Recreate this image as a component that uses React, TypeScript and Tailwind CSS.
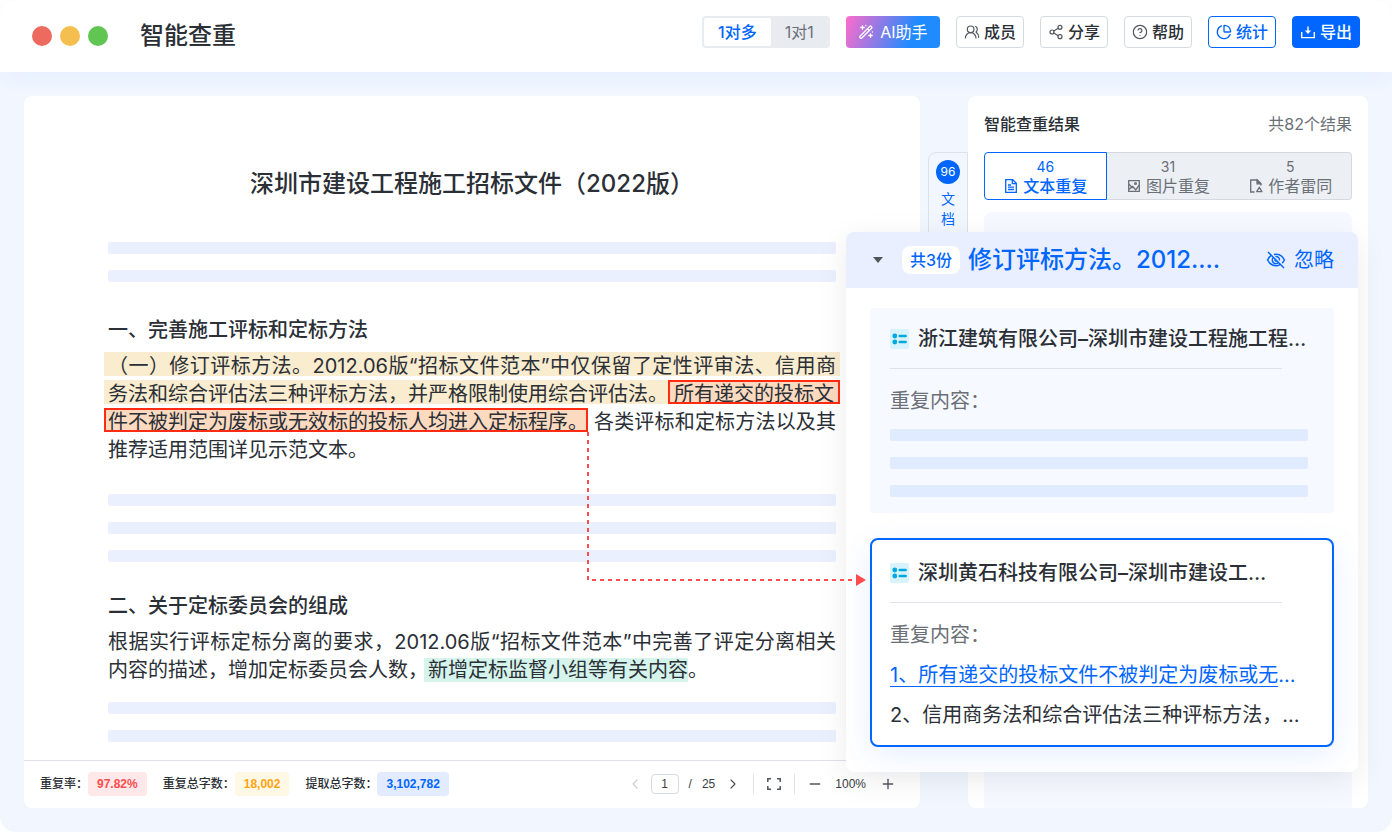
import { useState } from "react";
import type { ReactNode } from "react";
import { ChevronLeft, ChevronRight, CircleHelp, Minus, PieChart, Plus, Share2, UsersRound } from "lucide-react";
import { clsx } from "clsx";

/* ---------- icons ---------- */

function WandIcon() {
  return (
    <svg viewBox="0 0 16 16" className="size-4" fill="none" stroke="currentColor" strokeWidth="1.3" strokeLinejoin="round" strokeLinecap="round" aria-hidden="true">
      <path d="M2 12.2 11.8 2.4a1 1 0 0 1 1.4 0l.4.4a1 1 0 0 1 0 1.4L3.8 14a1 1 0 0 1-1.4 0L2 13.6a1 1 0 0 1 0-1.4z" />
      <path d="m9.6 4.700 1.8 1.8" />
      <path d="M4.5 1.8v3.4M2.8 3.5h3.4M12.500 9.8v3.4M10.8 11.5h3.4M7.8 1.5v.2M14.500 7.8v.2" />
    </svg>
  );
}

function ExportIcon() {
  return (
    <svg viewBox="0 0 16 16" className="size-4" fill="none" stroke="currentColor" strokeWidth="1.4" aria-hidden="true">
      <path d="M1.7 8v5.6h12.6V8" />
      <path d="M8 2.5v5" />
      <path d="M4.8 6.5h6.4L8 10z" fill="currentColor" stroke="none" />
    </svg>
  );
}

function TextFileIcon() {
  return (
    <svg viewBox="0 0 16 16" className="size-4" fill="none" stroke="currentColor" strokeWidth="1.3" aria-hidden="true">
      <path d="M2.7 1.7h7l3.6 3.6v9H2.7z" />
      <path d="M9.3 1.7v4h4" />
      <path d="M5 7h3M5 9.2h6M5 11.5h6" />
    </svg>
  );
}

function PictureIcon() {
  return (
    <svg viewBox="0 0 16 16" className="size-4" fill="none" stroke="currentColor" strokeWidth="1.3" aria-hidden="true">
      <path d="M2.7 2.7h10.6v10.6H2.7z" />
      <path d="m2.7 6 4 4M2.7 11.5l4-3 3 3.5 3.6-5" />
      <circle cx="9.5" cy="5.5" r=".9" />
    </svg>
  );
}

function AuthorFileIcon() {
  return (
    <svg viewBox="0 0 16 16" className="size-4" fill="none" stroke="currentColor" strokeWidth="1.3" aria-hidden="true">
      <path d="M6.5 14H2.7V2h6.6l3.5 3.5v2" />
      <path d="M9 2v3.8h3.8z" fill="currentColor" />
      <path d="M11.3 9.3 8.7 13.7h5.2z" strokeLinejoin="round" />
    </svg>
  );
}

function IgnoreIcon() {
  return (
    <svg viewBox="0 0 20 20" className="size-5" fill="none" stroke="currentColor" strokeWidth="1.5" aria-hidden="true">
      <path d="M5.6 5.2C3.900 6.300 2.500 8 1.600 10c1.700 3.500 4.800 5.700 8.400 5.700 1.500 0 2.900-.4 4.200-1.100M8 4.500a9 9 0 0 1 2-.2c3.600 0 6.700 2.200 8.400 5.700a10.500 10.500 0 0 1-2.200 3.100" />
      <path d="M7.300 7.600A3.500 3.500 0 0 0 12.400 12.500M9.500 6.500a3.500 3.500 0 0 1 4 4" />
      <path d="M9.200 9.400a1 1 0 0 0 1.400 1.400" />
      <path d="m2 2 16 16" />
    </svg>
  );
}

function ListBadge() {
  return (
    <svg viewBox="0 0 20 20" className="size-5 shrink-0" aria-hidden="true">
      <rect width="19" height="20" rx="2" fill="#d9f3fc" />
      <circle cx="4.800" cy="7" r="2.400" fill="#00a8e1" />
      <circle cx="4.800" cy="13" r="2.400" fill="#00a8e1" />
      <path d="M9.700 7h6M9.700 13h6" stroke="#00a8e1" strokeWidth="2.400" strokeLinecap="round" />
    </svg>
  );
}

function FullscreenIcon() {
  return (
    <svg viewBox="0 0 16 16" className="size-4" fill="none" stroke="currentColor" strokeWidth="1.5" aria-hidden="true">
      <path d="M1.800 6V2.800H5M11 2.800h3.200V6M14.200 10v3.200H11M5 13.200H1.800V10" />
    </svg>
  );
}

/* ---------- small parts ---------- */

function ToolButton({ icon, label, tone = "plain" }: { icon: ReactNode; label: string; tone?: "plain" | "outline" | "solid" }) {
  return (
    <button
      type="button"
      className={clsx(
        "flex h-8 items-center gap-1 rounded border px-[7px] text-base font-medium whitespace-nowrap",
        tone === "plain" && "border-[#d5d9e2] bg-white text-[#2b2f36]",
        tone === "outline" && "border-[#0066ff] bg-white text-[#0066ff]",
        tone === "solid" && "border-[#0066ff] bg-[#0066ff] text-white"
      )}
    >
      <span className={clsx(tone === "plain" && "text-[#51565d]")}>{icon}</span>
      {label}
    </button>
  );
}

function Bars({ count, color, className }: { count: number; color: string; className?: string }) {
  return (
    <div className={clsx("flex flex-col gap-4", className)}>
      {Array.from({ length: count }, (_, i) => (
        <div key={i} className={clsx("h-3 rounded-[2px]", color)} />
      ))}
    </div>
  );
}

function Stat({ label, value, tone }: { label: string; value: string; tone: string }) {
  return (
    <div className="flex items-center">
      <dt className="font-medium">{label}</dt>
      <dd className={clsx("rounded px-[9px] font-['Liberation_Sans',sans-serif] font-bold leading-6", tone)}>{value}</dd>
    </div>
  );
}

/* ---------- header ---------- */

function Header() {
  const [mode, setMode] = useState("1对多");

  return (
    <header className="relative flex h-[72px] items-center justify-between rounded-t-2xl bg-white px-8 shadow-[0_8px_24px_rgba(0,85,255,0.05)]">
      <div className="flex items-center gap-2">
        <span className="size-5 rounded-full bg-[#ec6a5e]" />
        <span className="size-5 rounded-full bg-[#f4bf4f]" />
        <span className="size-5 rounded-full bg-[#61c554]" />
        <h1 className="ml-6 text-2xl font-medium">智能查重</h1>
      </div>

      <div className="mt-4 flex gap-4 self-start">
        <div className="flex h-8 w-32 rounded bg-[#e8ebf0] p-[2px]">
          {["1对多", "1对1"].map((item) => (
            <button
              key={item}
              type="button"
              aria-pressed={mode === item}
              onClick={() => setMode(item)}
              className={clsx(
                "flex-auto rounded-[2px] text-base leading-7",
                mode === item ? "bg-white font-medium text-[#0066ff]" : "text-[#6b7077]"
              )}
            >
              {item}
            </button>
          ))}
        </div>
        <button
          type="button"
          className="flex h-8 w-[94px] items-center justify-center gap-1.5 rounded bg-linear-[110deg,#ff6bcb_0%,#1f8bff_70%] text-base whitespace-nowrap text-white"
        >
          <WandIcon />
          AI助手
        </button>
        <ToolButton icon={<UsersRound size={16} strokeWidth={1.8} />} label="成员" />
        <ToolButton icon={<Share2 size={16} strokeWidth={1.8} />} label="分享" />
        <ToolButton icon={<CircleHelp size={16} strokeWidth={1.8} />} label="帮助" />
        <ToolButton icon={<PieChart size={16} strokeWidth={2} />} label="统计" tone="outline" />
        <ToolButton icon={<ExportIcon />} label="导出" tone="solid" />
      </div>
    </header>
  );
}

/* ---------- document ---------- */

function Footer() {
  return (
    <footer className="flex h-12 items-center justify-between border-t border-[#dfe2ea] pr-6 pb-px pl-4 text-xs">
      <dl className="flex gap-4">
        <Stat label="重复率：" value="97.82%" tone="bg-[#fee8e9] text-[#ff4d4f]" />
        <Stat label="重复总字数：" value="18,002" tone="bg-[#fff8e5] text-[#ffa414]" />
        <Stat label="提取总字数：" value="3,102,782" tone="bg-[#e2ebff] text-[#0066ff]" />
      </dl>

      <div className="flex items-center gap-3 font-['Liberation_Sans',sans-serif] text-[#3a3e45]">
        <div className="flex items-center gap-2">
          <button type="button" aria-label="上一页" className="text-[#c9cdd6]">
            <ChevronLeft size={16} strokeWidth={1.8} />
          </button>
          <input
            aria-label="页码"
            defaultValue="1"
            className="h-5 w-7 rounded border border-[#d5d9e2] text-center"
          />
          <span className="pl-0.5">/</span>
          <span className="px-0.5">25</span>
          <button type="button" aria-label="下一页" className="text-[#51565d]">
            <ChevronRight size={16} strokeWidth={1.8} />
          </button>
        </div>
        <span className="h-5 w-px bg-[#dfe2ea]" />
        <button type="button" aria-label="全屏" className="text-[#51565d]">
          <FullscreenIcon />
        </button>
        <span className="h-5 w-px bg-[#dfe2ea]" />
        <button type="button" aria-label="缩小" className="text-[#51565d]">
          <Minus size={16} strokeWidth={2} />
        </button>
        <span className="pr-0.5">100%</span>
        <button type="button" aria-label="放大" className="text-[#51565d]">
          <Plus size={16} strokeWidth={2} />
        </button>
      </div>
    </footer>
  );
}

function DocumentPane() {
  return (
    <section className="flex min-w-0 flex-1 flex-col rounded-lg bg-white">
      <article className="flex-1 px-[84px] pt-[72px] pb-4 text-xl leading-6">
        <h2 className="text-center text-2xl leading-8 font-medium">深圳市建设工程施工招标文件（2022版）</h2>
        <Bars count={2} color="bg-[#ebf0ff]" className="mt-[42px]" />

        <h3 className="mt-8 leading-8 font-medium">一、完善施工评标和定标方法</h3>
        <div className="-mx-1 mt-1.5 flex flex-col gap-1 leading-5 whitespace-nowrap">
          <div className="bg-[#f9eccf] px-1 pt-1 [text-align-last:justify]">
            （一）修订评标方法。2012.06版“招标文件范本”中仅保留了定性评审法、信用商
          </div>
          <div className="flex">
            <span className="flex-1 bg-[#f9eccf] pt-1 pl-1">务法和综合评估法三种评标方法，并严格限制使用综合评估法。</span>
            <mark className="bg-[#fbdac0] px-1.5 pt-1 text-inherit outline-2 -outline-offset-2 outline-[#ff2b12]">
              所有递交的投标文
            </mark>
          </div>
          <div className="flex gap-1.5">
            <mark className="bg-[#fbdac0] pt-1 pl-1 text-inherit outline-2 -outline-offset-2 outline-[#ff2b12]">
              件不被判定为废标或无效标的投标人均进入定标程序。
            </mark>
            <span className="flex-1 pt-1 pr-1 [text-align-last:justify]">各类评标和定标方法以及其</span>
          </div>
          <div className="px-1 pt-1">推荐适用范围详见示范文本。</div>
        </div>
        <Bars count={3} color="bg-[#ebf0ff]" className="mt-[34px]" />

        <h3 className="mt-7 leading-8 font-medium">二、关于定标委员会的组成</h3>
        <div className="mt-2 flex flex-col gap-1 whitespace-nowrap">
          <div className="[text-align-last:justify]">
            根据实行评标定标分离的要求，2012.06版“招标文件范本”中完善了评定分离相关
          </div>
          <div className="flex">
            内容的描述，增加定标委员会人数，
            <mark className="-ml-1 bg-[#d5f4eb] pl-1 text-inherit">新增定标监督小组等有关内容</mark>
            。
          </div>
        </div>
        <Bars count={2} color="bg-[#ebf0ff]" className="mt-5" />
      </article>
      <Footer />
    </section>
  );
}

/* ---------- results ---------- */

const resultTabs = [
  { count: 46, label: "文本重复", icon: <TextFileIcon /> },
  { count: 31, label: "图片重复", icon: <PictureIcon /> },
  { count: 5, label: "作者雷同", icon: <AuthorFileIcon /> },
];

function ResultsPane() {
  const [active, setActive] = useState(0);

  return (
    <aside className="flex w-[400px] shrink-0 flex-col rounded-lg bg-white px-4 pt-4">
      <div className="flex h-6 items-center justify-between text-base">
        <h2 className="font-medium">智能查重结果</h2>
        <span className="text-[#6b7077]">共82个结果</span>
      </div>

      <div className="mt-4 grid h-12 grid-cols-3">
        {resultTabs.map((tab, i) => (
          <button
            key={tab.label}
            type="button"
            aria-pressed={i === active}
            onClick={() => setActive(i)}
            className={clsx(
              "flex flex-col items-center justify-center pt-1 first:rounded-l last:rounded-r",
              i === active
                ? "border border-[#0066ff] bg-white font-medium text-[#0066ff]"
                : "border-y border-[#d5d9e2] bg-[#eceff4] text-[#6b7077] first:border-l last:border-r"
            )}
          >
            <span className="text-sm leading-4 font-normal">{tab.count}</span>
            <span className="flex items-center gap-1 text-base leading-[22px]">
              {tab.icon}
              {tab.label}
            </span>
          </button>
        ))}
      </div>

      <div className="mt-3 flex-1 rounded-t-lg bg-[#f6f9ff]" />
    </aside>
  );
}

function SourceTitle({ children }: { children: ReactNode }) {
  return (
    <>
      <h3 className="flex items-center gap-2 text-xl leading-[22px] font-medium whitespace-nowrap">
        <ListBadge />
        {children}
      </h3>
      <hr className="mt-[18px] mr-8 border-[#dfe2ea]" />
    </>
  );
}

// dashed connector from the marked sentence to the matching source
function Connector() {
  return (
    <svg className="absolute top-[200px] -left-[260px] h-[156px] w-[282px]" viewBox="0 0 282 156" aria-hidden="true">
      <path d="M2 0V148H270" fill="none" stroke="#ff4d4f" strokeWidth="2" strokeDasharray="4 4" />
      <path d="M270 142v12l10-6z" fill="#ff4d4f" />
    </svg>
  );
}

function MatchPopup() {
  return (
    <section className="absolute top-40 right-[34px] w-[512px] rounded-lg bg-white shadow-[0_8px_32px_rgba(0,0,0,0.08)]">
      <div className="flex h-14 items-center rounded-t-lg bg-[#eaefff] px-6 text-[#0066ff]">
        <button type="button" aria-label="收起" className="flex size-4 items-center justify-center text-[#51565d]">
          <svg viewBox="0 0 10 6" className="h-1.5 w-2.5" fill="currentColor" aria-hidden="true">
            <path d="M0 0h10L5 6z" />
          </svg>
        </button>
        <span className="ml-4 rounded-lg bg-white px-2 text-base leading-7 font-medium">共3份</span>
        <h2 className="ml-2 flex-1 text-2xl font-medium whitespace-nowrap">修订评标方法。2012.…</h2>
        <button type="button" className="flex items-center gap-2 text-xl">
          <IgnoreIcon />
          忽略
        </button>
      </div>

      <div className="flex flex-col gap-[25px] px-6 pt-5 pb-[25px] text-xl">
        <div className="rounded bg-[#f6f9ff] px-5 pt-5 pb-4">
          <SourceTitle>浙江建筑有限公司–深圳市建设工程施工程…</SourceTitle>
          <p className="mt-4 leading-8 text-[#6b7077]">重复内容：</p>
          <Bars count={3} color="bg-[#e0ebff]" className="mt-3 mr-1.5" />
        </div>

        <div className="rounded-lg border-2 border-[#0066ff] bg-white px-[18px] pt-[22px] pb-2.5 shadow-[0_8px_32px_rgba(0,102,255,0.1)]">
          <SourceTitle>深圳黄石科技有限公司–深圳市建设工…</SourceTitle>
          <p className="mt-4 leading-8 text-[#6b7077]">重复内容：</p>
          <ol className="mt-1 whitespace-nowrap">
            <li className="leading-10">
              <a href="#match-1" className="text-[#0066ff]">
                <span className="underline decoration-1 underline-offset-4">1、所有递交的投标文件不被判定为废标或无</span>…
              </a>
            </li>
            <li className="leading-10">2、信用商务法和综合评估法三种评标方法，…</li>
          </ol>
        </div>
      </div>
      <Connector />
    </section>
  );
}

export default function App() {
  return (
    <div lang="zh-CN" className="bg-white font-['Inter','Noto_Sans_CJK_SC',sans-serif] text-[#2b2f36]">
      <div className="flex min-h-screen flex-col rounded-2xl bg-[#f2f7ff]">
        <Header />
        <main className="relative flex flex-1 p-6">
          <DocumentPane />
          <button
            type="button"
            className="mt-14 ml-2 flex h-40 w-10 shrink-0 flex-col items-center rounded-l-lg border border-[#dfe2ea] bg-[#f2f7ff] pt-[7px] text-sm leading-5 text-[#0066ff]"
          >
            <span className="mb-[5px] flex size-6 items-center justify-center rounded-full bg-[#0066ff] text-xs text-white">96</span>
            <span>文</span>
            <span>档</span>
          </button>
          <ResultsPane />
          <MatchPopup />
        </main>
      </div>
    </div>
  );
}
